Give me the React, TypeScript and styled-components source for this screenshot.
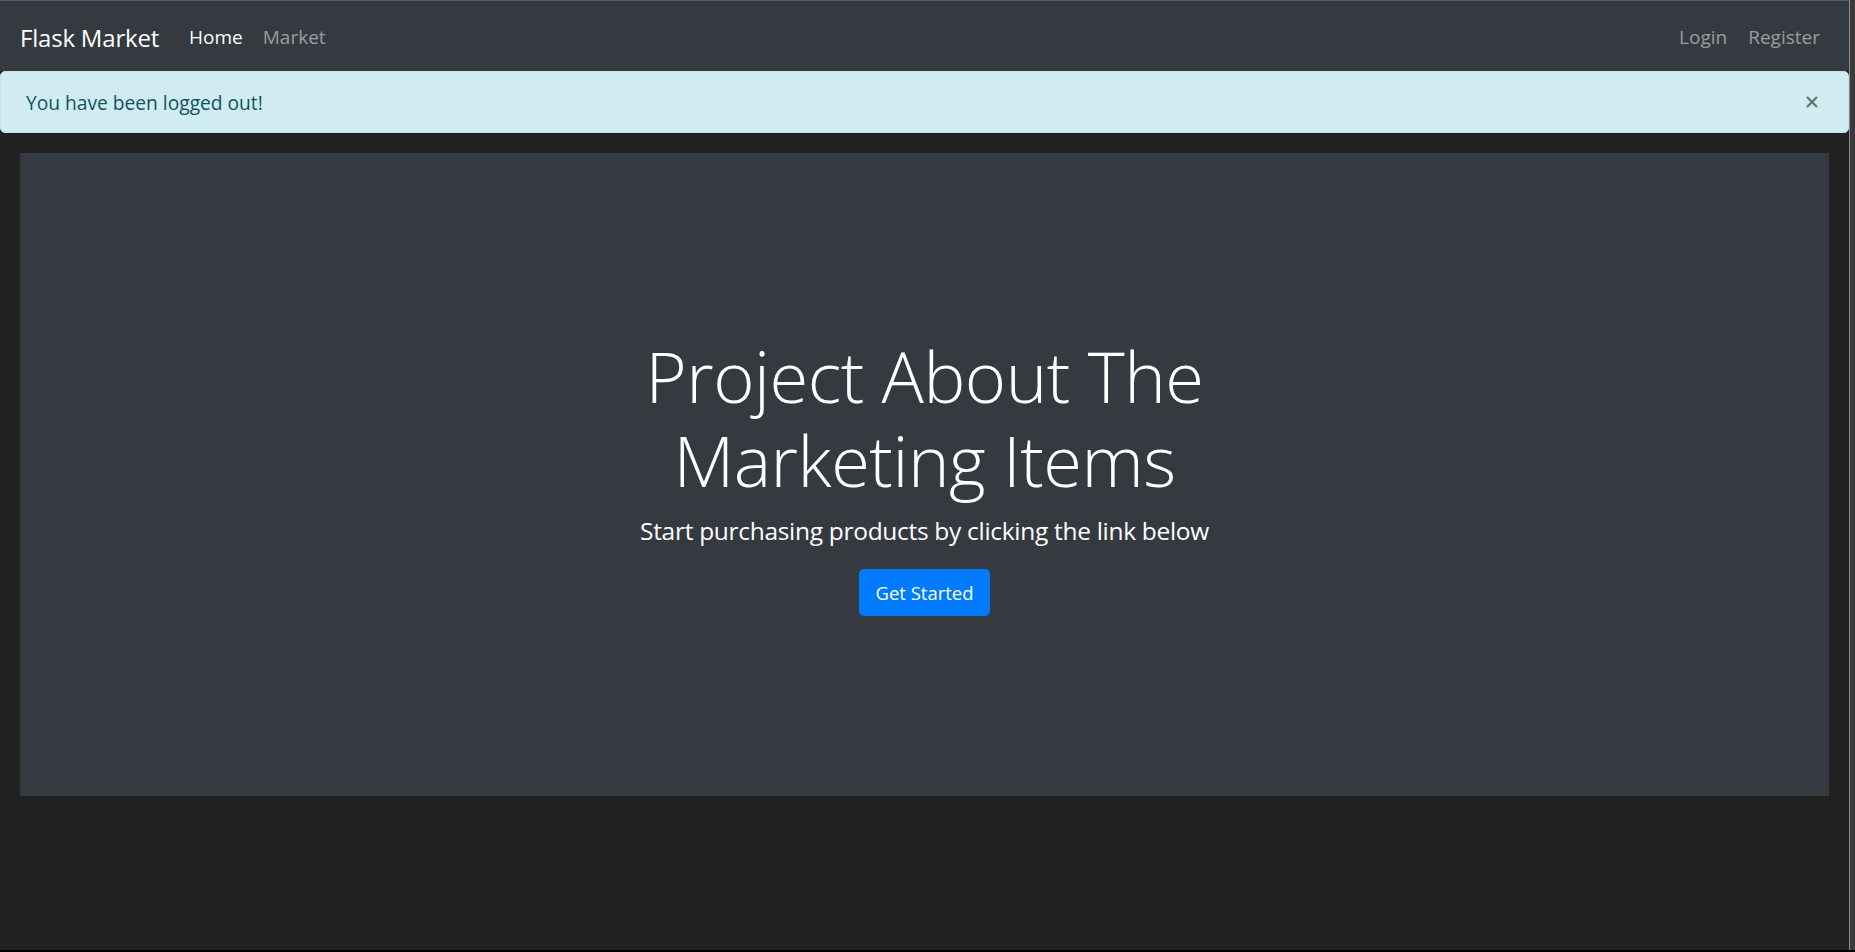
import React from "react";
import styled, { createGlobalStyle } from "styled-components";

const Global = createGlobalStyle`
  html, body { margin: 0; padding: 0; background: #000; }
  body { font-family: "Open Sans", "Noto Sans", sans-serif; }
  * { box-sizing: border-box; }
`;

const Frame = styled.div`
  width: 1855px;
  height: 952px;
  display: grid;
  grid-template-columns: 1fr 6px;
  grid-template-rows: 1fr 2px;
  background: #000;
  overflow: hidden;
`;

const Page = styled.div`
  background: #212121;
  border-top: 1px solid #5c5c5c;
  display: flex;
  flex-direction: column;
  overflow: hidden;
`;

const SideStrip = styled.div`
  background: #3b3b3b;
  border-left: 1px solid #8c8c8c;
`;

const BottomStrip = styled.div`
  grid-column: 1 / span 2;
  background: #000;
`;

const Navbar = styled.nav`
  height: 70px;
  background: #343a40;
  display: flex;
  align-items: center;
  padding: 2px 20px 0;
`;

const Brand = styled.a`
  font-size: 24px;
  color: #fff;
  margin-right: 30px;
  letter-spacing: -0.2px;
  text-decoration: none;
`;

const NavList = styled.div`
  display: flex;
  align-items: center;
  gap: 20px;
`;

const RightNav = styled(NavList)`
  margin-left: auto;
  margin-right: 9px;
  gap: 21px;
`;

const NavLink = styled.a<{ $active?: boolean }>`
  font-size: 19px;
  color: ${(p) => (p.$active ? "#ffffff" : "rgba(255,255,255,0.5)")};
  text-decoration: none;
`;

const Alert = styled.div`
  height: 62px;
  background: #d1ecf1;
  border: 1px solid #bee5eb;
  border-radius: 5px;
  color: #0c5460;
  display: flex;
  align-items: center;
  padding: 0 26px 0 25px;
  font-size: 19.2px;
  margin-bottom: 20px;
`;

const CloseButton = styled.button`
  margin-left: auto;
  background: none;
  border: none;
  padding: 0;
  width: 20px;
  height: 20px;
  display: flex;
  align-items: center;
  justify-content: center;
  opacity: 0.5;
  cursor: pointer;
`;

const Content = styled.div`
  padding: 0 20px;
`;

const Jumbotron = styled.section`
  height: 643px;
  background: #343a40;
  display: flex;
  flex-direction: column;
  align-items: center;
  justify-content: center;
  text-align: center;
  color: #fff;
`;

const Heading = styled.h1`
  margin: 0 0 10px;
  font-size: 70.5px;
  font-weight: 300;
  line-height: 84px;
  letter-spacing: -0.5px;
  max-width: 660px;
`;

const Lead = styled.p`
  margin: 0 0 20px;
  font-size: 24.5px;
  line-height: 37px;
  font-weight: 400;
  letter-spacing: -0.3px;
`;

const PrimaryButton = styled.a`
  display: inline-flex;
  align-items: center;
  justify-content: center;
  width: 131px;
  height: 47px;
  background: #007bff;
  border-radius: 5px;
  color: #fff;
  font-size: 18.5px;
  text-decoration: none;
`;

export default function App() {
  return (
    <>
      <Global />
      <Frame>
        <Page>
          <Navbar>
            <Brand href="#">Flask Market</Brand>
            <NavList>
              <NavLink $active href="#">Home</NavLink>
              <NavLink href="#">Market</NavLink>
            </NavList>
            <RightNav>
              <NavLink href="#">Login</NavLink>
              <NavLink href="#">Register</NavLink>
            </RightNav>
          </Navbar>
          <Alert>
            You have been logged out!
            <CloseButton aria-label="Close">
              <svg width="14" height="14" viewBox="0 0 14 14">
                <path d="M2 2 L12 12 M12 2 L2 12" stroke="#000" strokeWidth="2.4" />
              </svg>
            </CloseButton>
          </Alert>
          <Content>
            <Jumbotron>
              <Heading>Project About The Marketing Items</Heading>
              <Lead>Start purchasing products by clicking the link below</Lead>
              <PrimaryButton href="#">Get Started</PrimaryButton>
            </Jumbotron>
          </Content>
        </Page>
        <SideStrip />
        <BottomStrip />
      </Frame>
    </>
  );
}
